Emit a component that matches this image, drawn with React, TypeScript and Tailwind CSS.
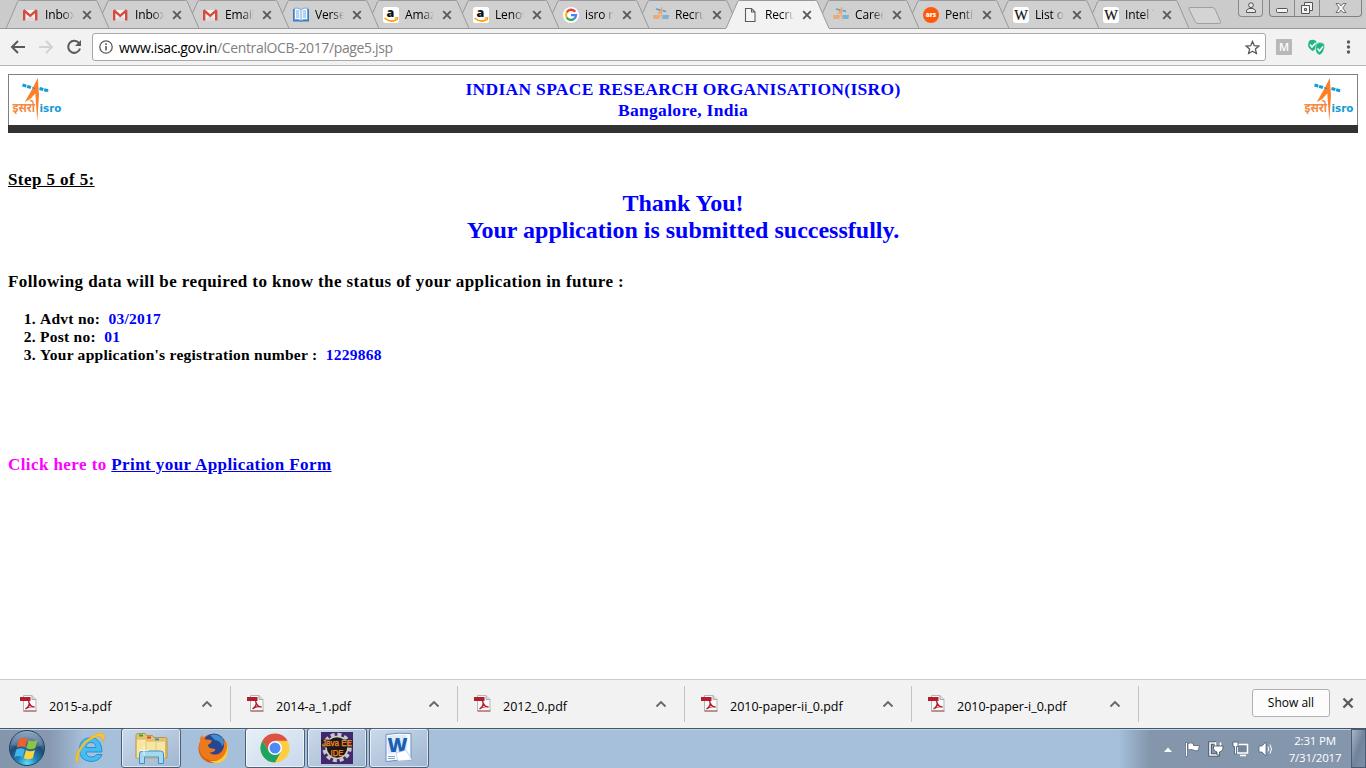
import React from "react";

type IconKind = "gmail" | "book" | "amazon" | "google" | "isro" | "doc" | "ars" | "wiki";

const tabs: { icon: IconKind; title: string; active?: boolean }[] = [
  { icon: "gmail", title: "Inbox" },
  { icon: "gmail", title: "Inbox" },
  { icon: "gmail", title: "Email" },
  { icon: "book", title: "Verse" },
  { icon: "amazon", title: "Amaz" },
  { icon: "amazon", title: "Lenov" },
  { icon: "google", title: "isro re" },
  { icon: "isro", title: "Recru" },
  { icon: "doc", title: "Recru", active: true },
  { icon: "isro", title: "Caree" },
  { icon: "ars", title: "Pentiu" },
  { icon: "wiki", title: "List of" },
  { icon: "wiki", title: "Intel T" },
];

const downloads = ["2015-a.pdf", "2014-a_1.pdf", "2012_0.pdf", "2010-paper-ii_0.pdf", "2010-paper-i_0.pdf"];

function Favicon({ kind }: { kind: IconKind }) {
  const cls = "block h-4 w-4 shrink-0";
  switch (kind) {
    case "gmail":
      return (
        <svg className={cls} viewBox="0 0 16 16">
          <path d="M1 3h13v11H1z" fill="#f2f2f2" />
          <path d="M1 14l6.500-6L14 14z" fill="#dcdcdc" />
          <path d="M0 13.500V3.600L1.500 2.200 7.200 7.200l5.700-5L14.400 3.600v9.900h-2.400V6.200L7.200 10.300 2.400 6.200v7.300z" fill="#d54b3d" />
        </svg>
      );
    case "book":
      return (
        <svg className={cls} viewBox="0 0 16 16">
          <path d="M0 2h16v12.500H9L8 15l-1-.5H0z" fill="#3b7fc4" />
          <path d="M1.500 1.200Q5 .5 8 2.500 11 .5 14.500 1.200v11.500Q11 12 8 13.500 5 12 1.500 12.700z" fill="#f6faff" stroke="#5d9ad6" strokeWidth=".8" />
          <path d="M8 2.500v11M3 4h3.200M3 6h3.200M3 8h3.200M3 10h3.200M9.800 4H13M9.800 6H13M9.800 8H13M9.800 10H13" stroke="#6aa3da" strokeWidth=".9" />
        </svg>
      );
    case "amazon":
      return (
        <svg className={cls} viewBox="0 0 16 16">
          <rect width="16" height="16" rx="2.500" fill="#fff" />
          <text x="7.500" y="10" textAnchor="middle" fontFamily="Open Sans" fontWeight="800" fontSize="12.500" fill="#111">a</text>
          <path d="M1.500 11Q8 16.500 13.500 12.300" fill="none" stroke="#f90" strokeWidth="1.600" />
          <path d="M11.500 11l3.200-.3-.7 3" fill="none" stroke="#f90" strokeWidth="1.100" />
        </svg>
      );
    case "google":
      return (
        <svg className={cls} viewBox="0 0 16 16">
          <circle cx="8" cy="8" r="8" fill="#fff" />
          <g fill="none" strokeWidth="2.300">
            <path d="M12.200 4.800A5 5 0 0 0 3.700 5.500" stroke="#ea4335" />
            <path d="M3.700 5.500a5 5 0 0 0 0 5" stroke="#fbbc05" />
            <path d="M3.700 10.500a5 5 0 0 0 7.600 1.200" stroke="#34a853" />
            <path d="M11.300 11.700A5 5 0 0 0 13 8.200H8" stroke="#4285f4" />
          </g>
        </svg>
      );
    case "isro":
      return (
        <svg className={cls} viewBox="0 0 16 16">
          <path d="M8.500 0L4 8l3.500-2.200L8.300 15l1-15z" fill="#f4a261" />
          <path d="M3 2l4 1M9.500 3.500l3.500 1" stroke="#4aa3d2" strokeWidth="1.500" />
          <path d="M0 9h7M.5 11H6.500" stroke="#f0a060" strokeWidth="1.600" />
          <path d="M9.500 9H16M9.500 11h6" stroke="#5aaad4" strokeWidth="1.600" />
        </svg>
      );
    case "doc":
      return (
        <svg className={cls} viewBox="0 0 16 16">
          <path d="M2.500 1.500h6l3.500 3.500v9.500H2.500zM8.500 1.500V5H12" fill="#f5f5f5" stroke="#5c5c5c" strokeWidth="1.100" />
        </svg>
      );
    case "ars":
      return (
        <svg className={cls} viewBox="0 0 16 16">
          <circle cx="8" cy="8" r="8" fill="#ff5a0a" />
          <text x="8" y="10.200" textAnchor="middle" fontFamily="Open Sans" fontWeight="800" fontSize="6.500" fill="#fff">ars</text>
        </svg>
      );
    case "wiki":
      return (
        <svg className={cls} viewBox="0 0 16 16">
          <rect width="16" height="16" rx="3" fill="#fff" />
          <text x="8" y="12.800" textAnchor="middle" fontFamily="Liberation Serif" fontSize="14.500" fill="#111" stroke="#111" strokeWidth=".2">W</text>
        </svg>
      );
  }
}

function Close({ className }: { className: string }) {
  return (
    <svg className={className} viewBox="0 0 10 10">
      <path d="M1.200 1.200l7.600 7.600M8.800 1.200L1.200 8.800" stroke="#5a5a5a" strokeWidth="1.900" />
    </svg>
  );
}

const tabLayer = ["z-[13]", "z-[12]", "z-[11]", "z-[10]", "z-[9]", "z-[8]", "z-[7]", "z-[6]", "z-20", "z-[5]", "z-[4]", "z-[3]", "z-[2]"];

function TabStrip() {
  return (
    <div className="relative flex h-[29px] bg-[#cbcbcb] pl-[6px] shadow-[inset_0_-1px_0_#999]">
      {tabs.map((t, i) => (
        <div key={i} className={`relative mr-[-13px] flex h-[29px] w-[103px] shrink-0 items-center pt-[1px] pl-[17px] ${tabLayer[i]}`}>
          <svg className="absolute inset-0 h-[29px] w-[103px]" viewBox="0 0 103 29">
            <path d="M0 28.500L11.500 2Q12 .5 13.500 .5H89.500Q91 .5 91.500 2L103 28.500" fill={t.active ? "#f2f2f2" : "#d0d0d0"} stroke="#999" />
            <path d="M0 28.500H103" stroke={t.active ? "#f2f2f2" : "#999"} />
          </svg>
          <div className="relative"><Favicon kind={t.icon} /></div>
          <div className="relative ml-[6px] h-[18px] w-[29px] whitespace-nowrap bg-gradient-to-r from-black from-60% to-transparent bg-clip-text text-[12px] leading-[18px] tracking-[-0.15px] text-transparent">{t.title}</div>
          <Close className="relative ml-[8px] h-[10px] w-[10px]" />
        </div>
      ))}
      <svg className="mt-[6px] ml-[10px] h-[20px] w-[38px]" viewBox="0 0 38 20">
        <path d="M4 1.500H26Q28 1.500 29 3L34.500 15.500Q35 17.500 33 17.500H12Q10 17.500 9 15.500L3 3Q2.500 1.500 4 1.500z" fill="#d4d4d4" stroke="#a0a0a0" />
      </svg>
      <div className="ml-auto flex h-[17px] pr-[4px]">
        <div className="mr-[6px] flex w-[25px] justify-center rounded-b-[4px] border border-t-0 border-[#8a8a8a] bg-[#d0d0d0]">
          <svg className="h-[14px] w-[14px]" viewBox="0 0 14 14"><g fill="#e8e8e8" stroke="#555"><circle cx="7" cy="5.200" r="2.400" /><path d="M2.500 12.500v-2.200L5 8.500h4l2.500 1.800v2.200z" /></g></svg>
        </div>
        <div className="flex w-[93px] rounded-b-[4px] border border-t-0 border-[#808080] bg-[#cdcdcd]">
          <div className="flex w-[25px] justify-center border-r border-[#8a8a8a]"><svg className="h-[16px] w-[14px]" viewBox="0 0 14 16"><rect x="1.500" y="8.500" width="11" height="4" rx="1" fill="#f4f4f4" stroke="#555" /></svg></div>
          <div className="flex w-[25px] justify-center border-r border-[#8a8a8a]"><svg className="h-[16px] w-[14px]" viewBox="0 0 14 16"><g fill="#f4f4f4" stroke="#555"><path d="M4.500 2.500h8v8h-8z" /><path d="M1.500 5.500h8v8h-8z" /><path d="M4.500 8.500h2v2h-2z" fill="#ccc" /></g></svg></div>
          <div className="flex flex-1 justify-center"><svg className="h-[16px] w-[14px]" viewBox="0 0 14 16"><path d="M2 3.500h3l2 2.500 2-2.500h3L8.800 8l3.200 4.500H9L7 10l-2 2.500H2L5.200 8z" fill="#f4f4f4" stroke="#666" strokeWidth=".9" /></svg></div>
        </div>
      </div>
    </div>
  );
}

function Toolbar() {
  return (
    <div className="flex h-[37px] items-center border-b border-[#b6b6b6] bg-[#f2f2f2] pl-[10px]">
      <svg className="h-4 w-4" viewBox="0 0 16 16"><path d="M15 8H2.500M8 2L2 8l6 6" fill="none" stroke="#5a5a5a" strokeWidth="2" /></svg>
      <svg className="ml-[12px] h-4 w-4" viewBox="0 0 16 16"><path d="M1 8h12.500M8 2l6 6-6 6" fill="none" stroke="#d2d2d2" strokeWidth="2" /></svg>
      <svg className="ml-[12px] h-4 w-4" viewBox="0 0 16 16"><path d="M13 4.200A6 6 0 1 0 14 9.500" fill="none" stroke="#5a5a5a" strokeWidth="2" /><path d="M15 1v6H9z" fill="#5a5a5a" /></svg>
      <div className="ml-[10px] flex h-[28px] w-[1174px] items-center rounded-[3px] border border-[#a8a8a8] bg-white pl-[6px]">
        <svg className="h-[14px] w-[14px]" viewBox="0 0 14 14"><circle cx="7" cy="7" r="6.200" fill="none" stroke="#5a5a5a" strokeWidth="1.300" /><path d="M7 6v4.500M7 3.300v1.600" stroke="#5a5a5a" strokeWidth="1.600" /></svg>
        <span className="ml-[6px] text-[14px] tracking-[-0.36px] text-[#808080]"><span className="text-black">www.isac.gov.in</span>/CentralOCB-2017/page5.jsp</span>
        <svg className="mr-[5px] ml-auto h-[15px] w-[15px]" viewBox="0 0 15 15"><path d="M7.500 1.500l1.800 4.200 4.500.4-3.400 3 1 4.400-3.900-2.300-3.900 2.300 1-4.400-3.400-3 4.500-.4z" fill="none" stroke="#5a5a5a" strokeWidth="1.300" /></svg>
      </div>
      <div className="ml-[10px] flex h-4 w-4 items-center justify-center rounded-[1px] bg-[#b8b8b8] text-[11px] font-semibold text-white">M</div>
      <svg className="ml-[16px] h-[17px] w-[17px]" viewBox="0 0 17 17"><path d="M1 2Q4 0 7.500 1.500Q9 3 8 8Q7 11 4.500 12Q0 9 0 6z" fill="#1fb681" /><path d="M8 5Q11 2 16 4.500Q17.500 9 15 13Q12.500 16.500 11.500 16Q8 15 7.500 11z" fill="#1fb681" stroke="#f2f2f2" strokeWidth=".6" /><path d="M2 5.500L4 8l3.500-4M9.500 9.500l2 2.500L15 7.500" stroke="#fff" strokeWidth="1.500" fill="none" /></svg>
      <svg className="ml-[21px] h-4 w-[6px]" viewBox="0 0 6 16"><g fill="#5a5a5a"><circle cx="2.500" cy="3" r="1.700" /><circle cx="2.500" cy="8" r="1.700" /><circle cx="2.500" cy="13" r="1.700" /></g></svg>
    </div>
  );
}

function IsroLogo() {
  return (
    <svg className="h-[48px] w-[52px]" viewBox="0 0 52 48">
      <path d="M25.800 3Q20 15 12.800 27L18 24.200 23.300 18.500 25.300 46.500 27 20z" fill="#ff7f27" />
      <path d="M10.500 10l9 2.700M27.500 13.500l9.500 2.500" stroke="#149bd7" strokeWidth="3" strokeDasharray="4 .8" />
      <path d="M20 12.700l3 .9" stroke="#149bd7" strokeWidth="1" />
      <text x="0.500" y="36.500" fontFamily="Noto Sans Devanagari, Noto Sans, sans-serif" fontWeight="700" fontSize="12" textLength="22.500" lengthAdjust="spacingAndGlyphs" fill="#f58a42">इसरो</text>
      <text x="27.500" y="36.500" fontFamily="DejaVu Sans" fontWeight="700" fontSize="11" textLength="22" lengthAdjust="spacingAndGlyphs" fill="#149bd7">isro</text>
    </svg>
  );
}

function Page() {
  return (
    <main className="h-[613px] bg-white px-2 pt-2 font-['Liberation_Serif',serif] font-bold text-black">
      <header className="flex h-[51px] justify-between border border-b-0 border-[#808080] pl-[3px] pr-[1px]">
        <IsroLogo />
        <div className="pt-[4px] pr-[2px] text-center text-[17.500px] leading-[21px] tracking-[0.31px] text-[#0000ff]">INDIAN SPACE RESEARCH ORGANISATION(ISRO)<br />Bangalore, India</div>
        <IsroLogo />
      </header>
      <div className="h-[8px] bg-[#333]" />
      <div className="mt-[37px] text-[17px] leading-[20px] tracking-[0.41px] underline">Step 5 of 5:</div>
      <div className="text-center text-[24px] leading-[27px] text-[#0000ff]">Thank You!<br />Your application is submitted successfully.</div>
      <p className="mt-[28px] text-[17px] leading-[20px] tracking-[0.41px]">Following data will be required to know the status of your application in future :</p>
      <ol className="mt-[18px] list-decimal pl-8 text-[15.500px] leading-[18px] tracking-[0.26px]">
        <li>Advt no: &nbsp;<span className="text-[#0000ff]">03/2017</span></li>
        <li>Post no: &nbsp;<span className="text-[#0000ff]">01</span></li>
        <li>Your application's registration number : &nbsp;<span className="text-[#0000ff]">1229868</span></li>
      </ol>
      <p className="mt-[91px] text-[17px] leading-[20px] tracking-[0.42px] text-[#ff00ff]">Click here to <a className="text-[#0000ee] underline">Print your Application Form</a></p>
    </main>
  );
}

function PdfIcon() {
  return (
    <svg className="h-[17px] w-[17px]" viewBox="0 0 17 17">
      <path d="M3.500 .5h8.500l4 4v11.500h-12.500z" fill="#fafafa" stroke="#b5b5b5" />
      <path d="M12 .5v4h4" fill="#ddd" stroke="#aaa" />
      <path d="M0 2h10.500v4H0z" fill="#b81c2c" />
      <path d="M8.500 6c1 4 3 6 6 6-3-.8-6.500 0-9 2 3-2 4.500-5 3-8z" fill="none" stroke="#b81c2c" strokeWidth="1.300" />
      <path d="M3.500 16h13" stroke="#8c2a30" strokeWidth=".8" />
    </svg>
  );
}

function DownloadShelf() {
  return (
    <div className="flex h-[49px] border-t border-[#ccc] bg-[#f2f2f2] pl-[4px] pt-[6px]">
      {downloads.map((name) => (
        <div key={name} className="flex h-[36px] w-[227px] border-r border-[#c4c4c4] pl-[16px]">
          <div className="pt-[9px]"><PdfIcon /></div>
          <span className="ml-[12px] pt-[12px] text-[12.500px] leading-[18px]">{name}</span>
          <svg className="mt-[13px] mr-[17px] ml-auto h-[10px] w-[12px]" viewBox="0 0 12 10"><path d="M1.500 7.500L6 3l4.500 4.500" fill="none" stroke="#666" strokeWidth="1.800" /></svg>
        </div>
      ))}
      <div className="mt-[3px] ml-[113px] flex h-[28px] w-[78px] items-center justify-center rounded-[3px] border border-[#b0b0b0] bg-[#fcfcfc] text-[12px]">Show all</div>
      <Close className="mt-[11px] ml-[12px] h-[12px] w-[12px]" />
    </div>
  );
}

function TaskButton({ children, bright, className }: { children: React.ReactNode; bright?: boolean; className?: string }) {
  return (
    <div className={`flex h-[40px] w-[60px] items-center justify-center rounded-[3px] border border-[#4d6077] shadow-[inset_0_0_0_1px_rgba(255,255,255,0.6)] ${bright ? "bg-gradient-to-br from-[#e8f0f8] to-[#c8d8ea]" : "bg-gradient-to-br from-[#cbdaec] to-[#9fb6d0]"} ${className ?? ""}`}>
      {children}
    </div>
  );
}

function Taskbar() {
  return (
    <div className="flex h-[40px] bg-[linear-gradient(90deg,#8396ac_0,#8799b0_50px,#a6c0dc_84px,#a6c0dc_1118px,#8396ac_1150px,#8396ac_100%)] shadow-[inset_0_1px_0_#43566b,inset_0_2px_0_#c0d2e4]">
      <svg className="mt-[2px] ml-[8px] h-[37px] w-[38px]" viewBox="0 0 38 37">
        <defs>
          <radialGradient id="orb" cx=".5" cy=".95" r=".95"><stop offset="0" stopColor="#5fe0ff" /><stop offset=".3" stopColor="#1d84b8" /><stop offset=".6" stopColor="#1d4a75" /><stop offset="1" stopColor="#9db4c9" /></radialGradient>
        </defs>
        <circle cx="19" cy="18" r="17.500" fill="url(#orb)" stroke="#24405e" />
        <path d="M3.500 15a16 14 0 0 1 31 0q-8 4-15 3T3.500 15z" fill="#fff" opacity=".15" />
        <path d="M11 9.500q5-3 8.500-.5l-2.300 8.300q-4-2-8.500.5z" fill="#f0602a" />
        <path d="M20.700 10q4 2.500 8.800 0l-2.200 8q-5 2.500-9 0z" fill="#8cc63e" />
        <path d="M8.300 19.500q4-2.500 8.500 0l-2.200 7.800q-4-2.500-8.300 0z" fill="#43b5ec" />
        <path d="M18 20q4 2.500 9 0l-2.200 8q-5 2.500-9 0z" fill="#ffd23a" />
      </svg>
      <svg className="mt-[4px] ml-[28px] h-[32px] w-[32px]" viewBox="0 0 32 32">
        <path d="M28 20H12q.5 5 5.500 5 3.500 0 5-2.500h5.500Q25.500 29.500 17 29.500 5.500 29 5.500 17.500T17 5.500q11 1 11 14.500zM12 15.500h10q-.5-5-5-5t-5 5z" fill="#45bdf2" stroke="#1687c4" strokeWidth=".8" />
        <path d="M5 30.500Q-1 30 3.500 20 9 8 22 2q7-2.500 8.500 1.500 .5 2.500-1.500 7 0-4.500-2-5.500Q22 3.500 14 9.500 7 15 4.500 24 3.500 28 5 30.500z" fill="#f6c530" stroke="#e2a81c" strokeWidth=".5" />
      </svg>
      <TaskButton className="ml-[15px]">
        <svg className="h-[34px] w-[34px]" viewBox="0 0 34 34">
          <path d="M2 4.500q0-2 2-2h7l1.500 2h6l1.500 2h11q2 0 2 2V27H2z" fill="#e3c471" stroke="#b9964b" />
          <path d="M5 3.500h4v2H5z" fill="#28a83a" /><path d="M13 5.500h4v2h-4z" fill="#df4433" /><path d="M21 7.500h4v2h-4z" fill="#348cd2" />
          <path d="M2.500 8h9l1.500 2h18.500v17h-29z" fill="#f8e5a2" stroke="#d8b864" />
          <path d="M12 10v17M22 10v17" stroke="#e4c87a" />
          <path d="M5.500 32.500V23q0-3 3-3h18q3 0 3 3v9.500h-5V26h-14v6.500z" fill="#a5d9f2" stroke="#3c91c8" />
          <path d="M10 15v9M5.500 19.500h9" stroke="#fff" strokeWidth="1" opacity=".8" />
        </svg>
      </TaskButton>
      <svg className="mt-[4px] ml-[16px] h-[32px] w-[32px]" viewBox="0 0 32 32">
        <circle cx="16" cy="16.500" r="14.500" fill="#e05a0c" />
        <circle cx="17" cy="12" r="10.500" fill="#28458f" /><path d="M13 3q8-2 13 4 2 5-1 7-1-5-7-6z" fill="#3f8fd0" />
        <path d="M3 9q0-4 2-6 1 3 3.500 4.500 3-.5 6.500 1-1 3.500-4 4.500 0 3 4 3.500 2.500 0 3.500 1-1.500 3.500-6 3 5 4.500 11 1 5-5 3-13 4 4 3 11Q28 29 15 28.500 3 27 2 15z" fill="#ea7a1c" />
        <path d="M26 6q7 8 1.500 17-6 8-15.500 5.500 9 6 16-1.500Q35 16 26 6z" fill="#ffcc33" />
      </svg>
      <TaskButton bright className="ml-[16px]">
        <svg className="h-[30px] w-[30px]" viewBox="0 0 30 30">
          <circle cx="15" cy="15" r="14.500" fill="#ffcd42" />
          <path d="M2.440 7.750A14.500 14.500 0 0 1 27.560 7.750H15L9 18.500z" fill="#dc5246" />
          <path d="M2.440 7.750A14.500 14.500 0 0 0 15 29.500L21 18.500H9z" fill="#1ea362" />
          <circle cx="15" cy="15" r="7" fill="#fff" /><circle cx="15" cy="15" r="5.500" fill="#4c8bf5" />
        </svg>
      </TaskButton>
      <TaskButton className="ml-[2px]">
        <svg className="h-[32px] w-[32px]" viewBox="0 0 32 32">
          <rect width="32" height="32" fill="#42296b" />
          <circle cx="16" cy="15.500" r="13" fill="none" stroke="#c8c8c8" strokeWidth="3.500" strokeDasharray="4 2.807" />
          <circle cx="16" cy="15.500" r="11" fill="#1c1718" stroke="#ccc" strokeWidth="1.500" />
          <path d="M0 7.500h32v8H0z" fill="#201819" opacity=".75" />
          <g fontFamily="Liberation Sans" fontSize="8.500" fill="#ff8d22" stroke="#ff8d22" strokeWidth=".25">
            <text x="1" y="14" textLength="30" lengthAdjust="spacingAndGlyphs">Java EE</text>
            <text x="9.500" y="23.500" textLength="13" lengthAdjust="spacingAndGlyphs">IDE</text>
          </g>
        </svg>
      </TaskButton>
      <TaskButton className="ml-[2px]">
        <svg className="h-[32px] w-[32px]" viewBox="0 0 32 32">
          <path d="M3 2.500Q15 .5 28 1.500v27q-13-1-25 1z" fill="#f8fbff" stroke="#6c91c3" />
          <path d="M4.500 4q9-1.500 19-1v18q-10-.5-19 1z" fill="#dceafa" />
          <text x="4.500" y="19.500" fontFamily="Open Sans" fontWeight="800" fontSize="20" textLength="20" lengthAdjust="spacingAndGlyphs" fill="#1b5fb4">W</text>
          <path d="M13 21l10-3 6 10-14 1z" fill="#fff" stroke="#a9c0de" strokeWidth=".6" /><path d="M5 24.500h7M5 26.500h7" stroke="#83a5d4" />
        </svg>
      </TaskButton>
      <div className="ml-auto flex">
        <svg className="mt-[18px] h-[8px] w-[10px]" viewBox="0 0 10 8"><path d="M1 6L5 1.500 9 6z" fill="#fff" /></svg>
        <svg className="mt-[13px] ml-[11px] h-[17px] w-[17px]" viewBox="0 0 17 17"><path d="M1.500 1.500h2v14h-2z" fill="#fff" stroke="#465468" strokeWidth=".6" /><path d="M4 2.500q3-1.500 5.500.5v1.500l6 .2-1.500 5q-3 .5-5.500-1Q7 8 4 9z" fill="#fff" stroke="#465468" strokeWidth=".7" /></svg>
        <svg className="mt-[13px] ml-[7px] h-[16px] w-[16px]" viewBox="0 0 16 16"><path d="M8 2H2v12h8v-1" fill="none" stroke="#3d4a5c" strokeWidth="3.200" /><path d="M8 2H2v12h8v-1" fill="none" stroke="#fff" strokeWidth="1.600" /><path d="M7.500 1.500v4M12.500 1.500v4" stroke="#fff" strokeWidth="1.600" /><path d="M5.500 5h9.500v2.500q-.5 3-3.500 3.500v3h-2.500v-3Q6 10.500 5.500 7.500z" fill="#fff" stroke="#3d4a5c" strokeWidth=".8" /></svg>
        <svg className="mt-[13px] ml-[8px] h-[16px] w-[17px]" viewBox="0 0 17 16"><path d="M5 3.500h10.500v8.500H5z" fill="#74869c" stroke="#fff" strokeWidth="1.500" /><path d="M8 14.500h6" stroke="#fff" strokeWidth="1.600" /><path d="M1 1h5v4.500H4.500V13H2.500V5.500H1z" fill="#fff" stroke="#46566b" strokeWidth=".8" /></svg>
        <svg className="mt-[13px] ml-[9px] h-[16px] w-[16px]" viewBox="0 0 16 16"><path d="M1 5h3l4-4v14l-4-4H1z" fill="#fff" stroke="#46566b" strokeWidth=".7" /><path d="M10 5.500q1.500 2.500 0 5M12 3.500q3 4.500 0 9" fill="none" stroke="#fff" /></svg>
        <div className="ml-[12px] w-[58px] pt-[4px] text-center text-[11.500px] leading-[17px] tracking-[-0.2px] text-white">2:31 PM<br />7/31/2017</div>
        <div className="mt-[1px] ml-[7px] h-[39px] w-[15px] border border-[#4c5c70] bg-gradient-to-br from-[#a9b6c5] via-[#71839a] to-[#7d90a7]" />
      </div>
    </div>
  );
}

export default function App() {
  return (
    <div className="flex h-[768px] w-[1366px] flex-col overflow-hidden bg-white font-['Open_Sans',sans-serif] text-black">
      <TabStrip />
      <Toolbar />
      <Page />
      <DownloadShelf />
      <Taskbar />
    </div>
  );
}
